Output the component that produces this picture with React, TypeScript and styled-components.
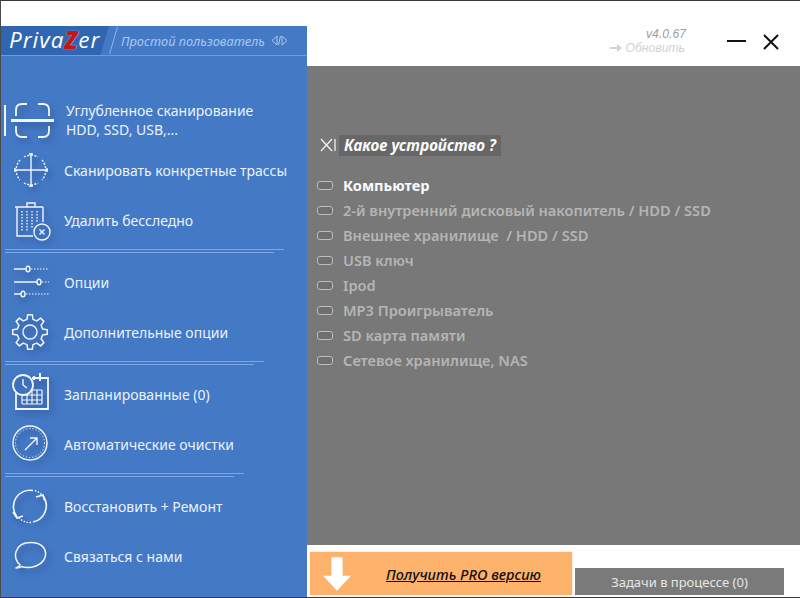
import React from 'react'
import styled, { createGlobalStyle } from 'styled-components'

const GlobalStyle = createGlobalStyle`
  html, body { margin: 0; padding: 0; background: #fff; }
  body { font-family: "Noto Sans", "Open Sans", "Liberation Sans", sans-serif; }
  * { box-sizing: border-box; }
`

const Window = styled.div`
  width: 800px;
  height: 598px;
  display: flex;
  overflow: hidden;
  background: #fff;
  border-top: 1px solid #3a3a3a;
  border-bottom: 1px solid #3a3a3a;
  border-left: 1px solid #4a4a4a;
`

const Sidebar = styled.aside`
  width: 306px;
  flex: none;
  padding-top: 25px;
  display: flex;
  flex-direction: column;
`

const Brand = styled.div`
  height: 30px;
  flex: none;
  display: flex;
  align-items: center;
  background: #4479c6;
  border-bottom: 1px solid #6d9bdc;
`

const Logo = styled.div`
  width: 108px;
  height: 29px;
  padding: 0 0 1px 8px;
  display: flex;
  align-items: center;
  background: #2f66b2;
  clip-path: polygon(0 0, 100% 0, 92% 100%, 0 100%);
  color: #fff;
  font: italic 400 22.5px/1 "Open Sans", "Noto Sans", sans-serif;
  letter-spacing: 1px;
`

const LogoMark = styled.span`
  color: #c2151c;
  font-weight: 800;
  font-size: 24px;
  text-shadow: 0 0 1px #fff;
`

const BrandSlash = styled.span`
  width: 1px;
  height: 27px;
  margin-left: 4px;
  background: #8fb4e8;
  transform: skewX(-16deg);
`

const UserLevel = styled.span`
  margin-left: 7px;
  color: #a9c8f0;
  font-size: 12.8px;
  font-style: italic;
  white-space: nowrap;
`

const LevelGlyph = styled.svg`
  width: 17px;
  height: 11px;
  margin-left: 6px;
  stroke: #a9c8f0;
  fill: none;
`

const Menu = styled.nav`
  flex: 1;
  padding: 39px 0 0 3px;
  display: flex;
  flex-direction: column;
  background: #4479c6;
`

const MenuRow = styled.div<{ $active?: boolean }>`
  height: 50px;
  flex: none;
  display: flex;
  align-items: center;
  gap: ${p => (p.$active ? 10 : 8)}px;
  border-left: 2px solid transparent;
  color: #eaf2fd;
  font-size: 14px;
  line-height: 19px;
  ${p => p.$active && 'border-image: linear-gradient(transparent 11px, #f2f6fc 11px, #f2f6fc 40px, transparent 40px) 1;'}
`

const IconSlot = styled.svg`
  width: 48px;
  height: 44px;
  flex: none;
  margin: 2px 0 0 2px;
  overflow: visible;
  fill: none;
  stroke: #f1f6fd;
  stroke-width: 1.4;
  filter: drop-shadow(3px 4px 3px rgba(25, 55, 110, 0.55));
`

const Divider = styled.div<{ $width: number }>`
  width: ${p => p.$width}px;
  margin: 4px 0 4px 1px;
  height: 4px;
  flex: none;
  border-top: 1px solid #7ba7e6;

  &::after {
    content: '';
    display: block;
    width: calc(100% - 10px);
    height: 1px;
    margin-top: 2px;
    background: #7ba7e6;
  }
`

const Main = styled.main`
  flex: 1;
  min-width: 0;
  display: flex;
  flex-direction: column;
`

const TopBar = styled.header`
  height: 65px;
  flex: none;
  display: flex;
  justify-content: flex-end;
  padding: 26px 19px 0 0;
`

const VersionBlock = styled.div`
  width: 80px;
  margin-right: 43px;
  display: flex;
  flex-direction: column;
  align-items: flex-end;
  font-family: "Liberation Sans", Arial, sans-serif;
  font-size: 12.2px;
  line-height: 14px;
  font-style: italic;
  white-space: nowrap;
`

const Version = styled.div`
  margin-right: -2px;
  color: #a0a0a0;
`

const Update = styled.div`
  display: flex;
  align-items: center;
  gap: 3px;
  height: 14px;
  margin-right: -1px;
  color: #d2d2d2;
`

const UpdateArrow = styled.svg`
  width: 12px;
  height: 8px;
  fill: #d2d2d2;
`

const WindowControls = styled.div`
  display: flex;
  gap: 14px;
  padding-top: 7px;
`

const ControlIcon = styled.svg`
  width: 20px;
  height: 16px;
  stroke: #111;
  stroke-width: 2;
  fill: none;
`

const Panel = styled.section`
  flex: 1;
  padding-top: 68px;
  background: #787878;
  display: flex;
  flex-direction: column;
`

const Question = styled.div`
  display: flex;
  align-items: center;
  height: 22px;
  padding-left: 13px;
  margin-bottom: 16px;
`

const QuestionMark = styled.svg`
  width: 18px;
  height: 14px;
  margin-right: 1px;
  stroke: #f0f0f0;
  stroke-width: 1.3;
  fill: none;
`

const QuestionText = styled.span`
  height: 21px;
  padding: 0 5px;
  background: #676767;
  color: #fafafa;
  font-size: 15.3px;
  font-weight: 700;
  font-style: italic;
  line-height: 20px;
  white-space: nowrap;
`

const Choice = styled.div<{ $selected?: boolean }>`
  height: 25px;
  padding-left: 10px;
  display: flex;
  align-items: center;
  gap: 10px;
  color: ${p => (p.$selected ? '#fbfbfb' : '#b5b5b5')};
  font-size: 14.6px;
  font-weight: ${p => (p.$selected ? 700 : 600)};
  white-space: pre;
`

const ChoiceBox = styled.span`
  width: 16px;
  height: 9px;
  flex: none;
  margin-top: 1px;
  border: 1.5px solid #bdbdbd;
  border-radius: 3px;
  background: #6f6f6f;
`

const Footer = styled.footer`
  height: 52px;
  flex: none;
  padding: 7px 15px 2px 3px;
  display: flex;
  align-items: flex-end;
  gap: 3px;
`

const ProButton = styled.button`
  width: 262px;
  height: 43px;
  padding: 0 31px 0 13px;
  border: 0;
  display: flex;
  align-items: center;
  justify-content: space-between;
  background: #fdb26b;
  box-shadow: 0 0 2px #fcd3a9;
  color: #111;
  font: italic 500 14.5px "Noto Sans", sans-serif;
  text-decoration: underline;
`

const ProArrow = styled.svg`
  width: 28px;
  height: 34px;
  margin-top: 1px;
  fill: #fff;
`

const TasksButton = styled.button`
  width: 209px;
  height: 27px;
  border: 0;
  background: #7a7a7a;
  color: #e6e6e6;
  font: 400 13px "Noto Sans", sans-serif;
`

// outline of an eight-tooth gear around (cx, cy)
const gearPath = (cx: number, cy: number, outer: number, root: number, teeth = 8) => {
  const step = (Math.PI * 2) / teeth
  const pts: string[] = []
  for (let i = 0; i < teeth; i++) {
    const a = i * step - Math.PI / 2
    const at = (r: number, d: number) =>
      `${(cx + r * Math.cos(a + d * step)).toFixed(1)} ${(cy + r * Math.sin(a + d * step)).toFixed(1)}`
    pts.push(at(root, -0.3), at(outer, -0.17), at(outer, 0.17), at(root, 0.3))
  }
  return `M${pts.join('L')}Z`
}

const ScanIcon = () => (
  <IconSlot viewBox="0 0 48 44">
    <g strokeWidth="1.8">
      <path d="M8 17v-6q0-6 6-6h5M30 5h5q6 0 6 6v6" />
      <path d="M8 27v5q0 6 6 6h5M30 38h5q6 0 6-6v-5" />
    </g>
    <path d="M3 21.5h43" strokeWidth="3" />
  </IconSlot>
)

const TargetIcon = () => (
  <IconSlot viewBox="0 0 48 44">
    <path d="M23 4v34M6 21h34" />
    <path d="M12 11a15 15 0 0 0 0 20M34 11a15 15 0 0 1 0 20M16 8a15 15 0 0 1 14 0M16 34a15 15 0 0 0 14 0" strokeDasharray="2 1.5" />
    <path d="M21 5h4M21 37h4M7 19v4M39 19v4" />
  </IconSlot>
)

const TrashIcon = () => (
  <IconSlot viewBox="0 0 48 44">
    <path d="M7 8h28M19 8V4h8v4" />
    <path d="M9 8v29h16M35 8v15" />
    <path d="M14 12v21M19 12v21M24 12v17M29 12v11" strokeDasharray="1.5 1.5" />
    <circle cx="34" cy="33" r="8" />
    <path d="M31.5 30.5l5 5M36.5 30.5l-5 5" />
  </IconSlot>
)

const SlidersIcon = () => (
  <IconSlot viewBox="0 0 48 44">
    <path d="M6 8h12M6 21h23M6 33h7" strokeWidth="1.6" />
    <path d="M23 8h18M34 21h7M18 33h23" strokeDasharray="1.5 1.5" strokeWidth="1" />
    <ellipse cx="20" cy="8" rx="2" ry="2.8" />
    <ellipse cx="31" cy="21" rx="2" ry="2.8" />
    <ellipse cx="15" cy="33" rx="2" ry="2.8" />
  </IconSlot>
)

const GearIcon = () => (
  <IconSlot viewBox="0 0 48 44">
    <circle cx="22" cy="21" r="7" />
    <path d={gearPath(22, 21, 17.5, 13)} strokeLinejoin="round" strokeWidth="1.5" />
  </IconSlot>
)

const CalendarIcon = () => (
  <IconSlot viewBox="0 0 48 44">
    <path d="M24 5h16v31H8V20" strokeWidth="1.8" />
    <path d="M32 0v8M26 3v4" strokeWidth="2" />
    <circle cx="15" cy="12" r="10" strokeWidth="1.8" />
    <path d="M15 6v6l4 3" />
    <path d="M24 17h10M14 22h20M14 27h20M14 31h20M14 22v9M19 22v9M24 17v14M29 17v14M34 17v14" strokeWidth="1.2" />
  </IconSlot>
)

const ClockIcon = () => (
  <IconSlot viewBox="0 0 48 44">
    <circle cx="22" cy="20" r="17" />
    <circle cx="22" cy="20" r="14.5" strokeDasharray="1.2 2" strokeWidth="1" />
    <path d="M17 27l12-12M22 15h7v7" />
  </IconSlot>
)

const RestoreIcon = () => (
  <IconSlot viewBox="0 0 48 44">
    <path d="M25 5.5A16.5 16.5 0 0 0 9 32" strokeWidth="1.6" />
    <path d="M35 11A16.5 16.5 0 0 1 25 37" strokeWidth="1.6" />
    <path d="M27 5.5A16.5 16.5 0 0 1 34 10M23 37.5A16.5 16.5 0 0 1 11 33" strokeDasharray="1.5 1.5" />
    <path d="M28 12l7-2 2 6" strokeWidth="1.8" />
    <path d="M5 27l4 6 6-2" strokeWidth="1.8" />
  </IconSlot>
)

const ChatIcon = () => (
  <IconSlot viewBox="0 0 48 44">
    <path d="M12 29.5C4 24 6 7.5 23 7.5 41 7.5 42 26 28 31 22 33 17 33 13.5 31.5 12 33 10 33 8 33 10 32 12 31 12 29.5Z" strokeWidth="1.5" strokeLinejoin="round" />
  </IconSlot>
)

const devices = [
  '2-й внутренний дисковый накопитель / HDD / SSD',
  'Внешнее хранилище  / HDD / SSD',
  'USB ключ',
  'Ipod',
  'MP3 Проигрыватель',
  'SD карта памяти',
  'Сетевое хранилище, NAS',
]

export default function App() {
  return (
    <>
      <GlobalStyle />
      <Window>
        <Sidebar>
          <Brand>
            <Logo>
              Priva<LogoMark>Z</LogoMark>er
            </Logo>
            <BrandSlash />
            <UserLevel>Простой пользователь</UserLevel>
            <LevelGlyph viewBox="0 0 17 11">
              <path d="M6 1L1 5.5 6 10zM11 1l5 4.5-5 4.5zM9.5 1L7.5 10" />
            </LevelGlyph>
          </Brand>
          <Menu>
            <MenuRow $active>
              <ScanIcon />
              <span>
                Углубленное сканирование
                <br />
                HDD, SSD, USB,...
              </span>
            </MenuRow>
            <MenuRow>
              <TargetIcon />
              Сканировать конкретные трассы
            </MenuRow>
            <MenuRow>
              <TrashIcon />
              Удалить бесследно
            </MenuRow>
            <Divider $width={279} />
            <MenuRow>
              <SlidersIcon />
              Опции
            </MenuRow>
            <MenuRow>
              <GearIcon />
              Дополнительные опции
            </MenuRow>
            <Divider $width={259} />
            <MenuRow>
              <CalendarIcon />
              Запланированные (0)
            </MenuRow>
            <MenuRow>
              <ClockIcon />
              Автоматические очистки
            </MenuRow>
            <Divider $width={239} />
            <MenuRow>
              <RestoreIcon />
              Восстановить + Ремонт
            </MenuRow>
            <MenuRow>
              <ChatIcon />
              Связаться с нами
            </MenuRow>
          </Menu>
        </Sidebar>
        <Main>
          <TopBar>
            <VersionBlock>
              <Version>v4.0.67</Version>
              <Update>
                <UpdateArrow viewBox="0 0 12 8">
                  <path d="M0 3h7V0l5 4-5 4V5H0z" />
                </UpdateArrow>
                Обновить
              </Update>
            </VersionBlock>
            <WindowControls>
              <ControlIcon viewBox="0 0 20 16">
                <path d="M0 7h19" />
              </ControlIcon>
              <ControlIcon viewBox="0 0 20 16">
                <path d="M3 1l14 14M17 1L3 15" />
              </ControlIcon>
            </WindowControls>
          </TopBar>
          <Panel>
            <Question>
              <QuestionMark viewBox="0 0 18 14">
                <path d="M1 1l11 12M12 1L1 13" />
                <path d="M15 1v12" />
              </QuestionMark>
              <QuestionText>Какое устройство ?</QuestionText>
            </Question>
            <Choice $selected>
              <ChoiceBox />
              Компьютер
            </Choice>
            {devices.map(name => (
              <Choice key={name}>
                <ChoiceBox />
                {name}
              </Choice>
            ))}
          </Panel>
          <Footer>
            <ProButton>
              <ProArrow viewBox="0 0 30 36">
                <path d="M9 0h12v20h9L15 36 0 20h9z" />
              </ProArrow>
              Получить PRO версию
            </ProButton>
            <TasksButton>Задачи в процессе (0)</TasksButton>
          </Footer>
        </Main>
      </Window>
    </>
  )
}
